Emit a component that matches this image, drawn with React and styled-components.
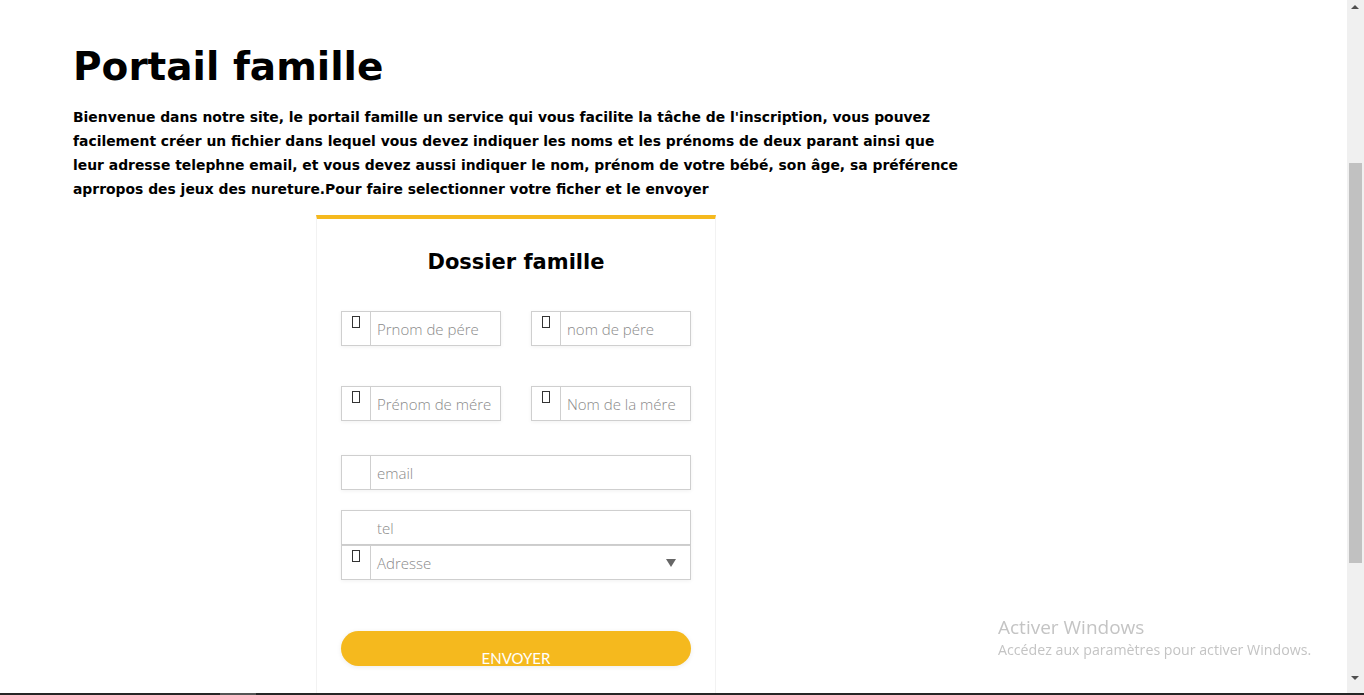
import React from "react";
import styled, { createGlobalStyle } from "styled-components";

const GlobalStyle = createGlobalStyle`
  html, body {
    margin: 0;
    padding: 0;
    background: #fff;
    overflow: hidden;
  }
  body {
    font-family: "DejaVu Sans", Verdana, sans-serif;
    color: #000;
  }
`;

const Page = styled.div`
  width: 1347px;
  height: 693px;
  overflow: hidden;
  padding: 0 0 0 73px;
  box-sizing: border-box;
`;

const Title = styled.h1`
  margin: 44px 0 0;
  font-size: 39px;
  line-height: 46px;
  font-weight: bold;
`;

const Intro = styled.p`
  margin: 15px 0 0;
  width: 890px;
  font-size: 13.9px;
  line-height: 24px;
  font-weight: bold;
`;

const Card = styled.div`
  margin: 14px 0 0 243px;
  width: 400px;
  box-sizing: border-box;
  border-top: 4px solid #f5b91e;
  border-left: 1px solid #f2f2f2;
  border-right: 1px solid #f2f2f2;
  padding: 25px 24px 40px;
`;

const CardTitle = styled.h2`
  margin: 0;
  text-align: center;
  font-size: 21px;
  line-height: 36px;
  font-weight: bold;
`;

const Row = styled.div`
  display: flex;
  justify-content: space-between;
  margin-top: ${({ $gap }) => $gap}px;
`;

const Field = styled.div`
  display: flex;
  width: ${({ $w }) => $w}px;
  height: 35px;
  box-sizing: border-box;
  border: 1px solid #cfcfcf;
  background: #fff;
  box-shadow: 0 1px 4px rgba(0, 0, 0, 0.06);
  margin-top: ${({ $top }) => $top || 0}px;
`;

const IconBox = styled.div`
  width: 29px;
  flex: none;
  box-sizing: border-box;
  border-right: ${({ $plain }) => ($plain ? "none" : "1px solid #cfcfcf")};
  display: flex;
  justify-content: center;
  padding-top: 4px;
`;

const Tofu = styled.span`
  width: 8px;
  height: 12px;
  box-sizing: border-box;
  border: 1px solid #333;
`;

const Placeholder = styled.div`
  flex: 1;
  padding-left: 6px;
  display: flex;
  align-items: center;
  justify-content: space-between;
  padding-right: 14px;
  font-family: "Open Sans", "Noto Sans", sans-serif;
  font-weight: 300;
  font-size: 15px;
  color: #8a8a8a;
  white-space: nowrap;
  overflow: hidden;
`;

const Caret = styled.span`
  width: 0;
  height: 0;
  border-left: 5px solid transparent;
  border-right: 5px solid transparent;
  border-top: 8px solid #666;
`;

const Button = styled.div`
  margin-top: 51px;
  height: 35px;
  border-radius: 18px;
  background: #f5b91e;
  box-shadow: 0 1px 5px rgba(0, 0, 0, 0.08);
  color: #fff;
  text-align: center;
  font-family: "Lato", "Open Sans", sans-serif;
  font-size: 15px;
  line-height: 16px;
  padding-top: 19px;
  box-sizing: border-box;
  overflow: hidden;
`;

const Scrollbar = styled.div`
  position: fixed;
  top: 0;
  right: 0;
  width: 17px;
  height: 693px;
  background: #f0f0f0;
`;

const Thumb = styled.div`
  position: absolute;
  left: 2px;
  width: 13px;
  top: 163px;
  height: 400px;
  background: #c1c1c1;
`;

const Arrow = styled.div`
  position: absolute;
  left: 4px;
  width: 0;
  height: 0;
  border-left: 4px solid transparent;
  border-right: 4px solid transparent;
  ${({ $down }) =>
    $down
      ? `bottom: 13px; border-top: 4px solid #505050;`
      : `top: 5px; border-bottom: 4px solid #505050;`}
`;

const Taskbar = styled.div`
  position: fixed;
  left: 0;
  bottom: 0;
  width: 100%;
  height: 2px;
  background: #262626;
`;

const TaskItem = styled.div`
  position: absolute;
  left: 220px;
  width: 36px;
  height: 2px;
  background: #555;
`;

const Watermark = styled.div`
  position: fixed;
  left: 998px;
  top: 614px;
  font-family: "Segoe UI", "Open Sans", "Noto Sans", sans-serif;
  color: #c4c4c4;
`;

const WmTitle = styled.div`
  font-size: 19px;
  line-height: 26px;
`;

const WmText = styled.div`
  font-size: 14.2px;
  line-height: 20px;
`;

const InputField = ({ w, label, icon = true, plain, select, top }) => (
  <Field $w={w} $top={top}>
    <IconBox $plain={plain}>{icon && <Tofu />}</IconBox>
    <Placeholder>
      {label}
      {select && <Caret />}
    </Placeholder>
  </Field>
);

export default function App() {
  return (
    <>
      <GlobalStyle />
      <Page>
        <Title>Portail famille</Title>
        <Intro>
          Bienvenue dans notre site, le portail famille un service qui vous
          facilite la tâche de l'inscription, vous pouvez facilement créer un
          fichier dans lequel vous devez indiquer les noms et les prénoms de
          deux parant ainsi que leur adresse telephne email, et vous devez aussi
          indiquer le nom, prénom de votre bébé, son âge, sa préférence
          aprropos des jeux des nureture.Pour faire selectionner votre ficher
          et le envoyer
        </Intro>
        <Card>
          <CardTitle>Dossier famille</CardTitle>
          <Row $gap={31}>
            <InputField w={160} label="Prnom de pére" />
            <InputField w={160} label="nom de pére" />
          </Row>
          <Row $gap={40}>
            <InputField w={160} label="Prénom de mére" />
            <InputField w={160} label="Nom de la mére" />
          </Row>
          <InputField w={350} label="email" icon={false} top={34} />
          <InputField w={350} label="tel" icon={false} plain top={20} />
          <InputField w={350} label="Adresse" select top={0} />
          <Button>ENVOYER</Button>
        </Card>
      </Page>
      <Watermark>
        <WmTitle>Activer Windows</WmTitle>
        <WmText>Accédez aux paramètres pour activer Windows.</WmText>
      </Watermark>
      <Scrollbar>
        <Arrow />
        <Thumb />
        <Arrow $down />
      </Scrollbar>
      <Taskbar>
        <TaskItem />
      </Taskbar>
    </>
  );
}
